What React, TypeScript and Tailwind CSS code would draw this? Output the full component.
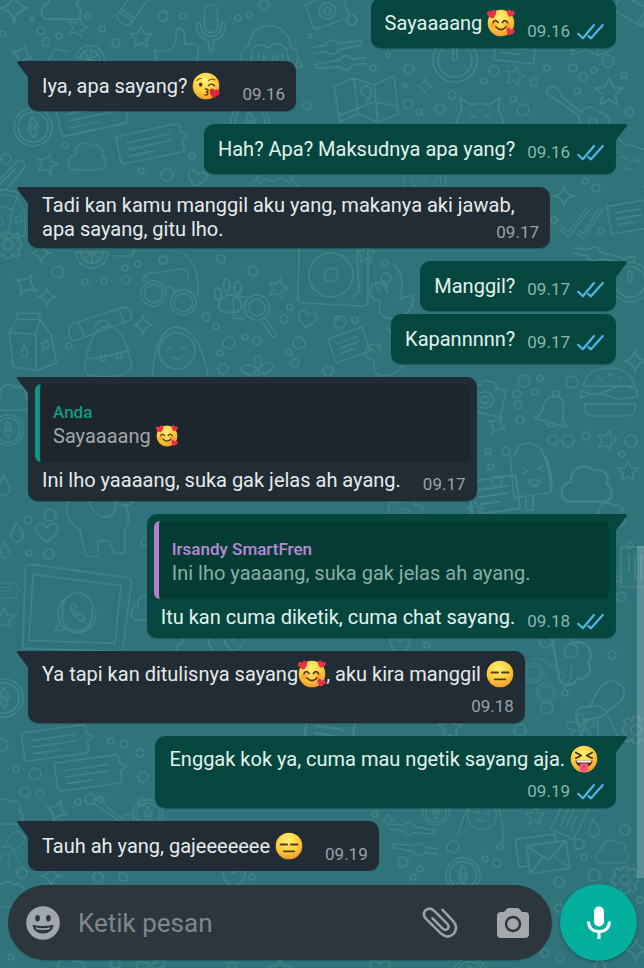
import type { ReactNode } from 'react'

type EmojiName = 'hearts' | 'kiss' | 'flat' | 'tongue'

type Message = {
  id: number
  own?: boolean
  tail?: boolean
  time: string
  layout?: 'inline' | 'wrap' | 'stacked'
  quote?: { author: string; body: ReactNode; own?: boolean }
  body: ReactNode
}

function cx(...classes: Array<string | false | undefined | null>) {
  return classes.filter(Boolean).join(' ')
}

const EMOJI_LABEL: Record<EmojiName, string> = {
  hearts: '🥰',
  kiss: '😘',
  flat: '😑',
  tongue: '😝',
}

const HEART = 'M0 3.4C-2.6 1.6-3.8 .2-3.8-1.4-3.8-3.6-1-4 0-2.1 1-4 3.8-3.6 3.8-1.4 3.8 .2 2.6 1.6 0 3.4Z'

function Emoji({ name, small }: { name: EmojiName; small?: boolean }) {
  return (
    <svg
      viewBox="0 0 28 28"
      role="img"
      aria-label={EMOJI_LABEL[name]}
      className={cx('-mt-1.5 -mb-0.5 inline-block align-middle', small ? 'size-[22px]' : 'size-7')}
    >
      <defs>
        <radialGradient id={`face-${name}`} cx="0.45" cy="0.3" r="0.75">
          <stop offset="0" stopColor="#fff07a" />
          <stop offset="0.55" stopColor="#fdce3c" />
          <stop offset="1" stopColor="#f0912a" />
        </radialGradient>
      </defs>
      <circle cx="14" cy="14" r="13.3" fill={`url(#face-${name})`} />
      {name === 'hearts' && (
        <>
          <circle cx="6.5" cy="16.5" r="3" fill="#f8853c" opacity="0.55" />
          <circle cx="20.5" cy="16" r="3" fill="#f8853c" opacity="0.55" />
          <path d="M6 13.5q2.4-3.6 5 0M15.5 13.5q2.4-3.6 5 0M9 18q5 5 10 0" fill="none" stroke="#5a3310" strokeWidth="1.7" strokeLinecap="round" />
          <g fill="#e8324a">
            <path d={HEART} transform="translate(5 5.5) rotate(-15) scale(1.25)" />
            <path d={HEART} transform="translate(23.5 4.5) rotate(20) scale(1.05)" />
            <path d={HEART} transform="translate(23.2 23) rotate(15) scale(1.1)" />
          </g>
        </>
      )}
      {name === 'kiss' && (
        <>
          <path d="M5 8.5q1.6-2.2 4.4-2M16.5 8.5q3.2-2.6 6.5-.5" fill="none" stroke="#8a5518" strokeWidth="1.2" strokeLinecap="round" />
          <ellipse cx="8.7" cy="12.6" rx="1.7" ry="2.2" fill="#553010" />
          <path d="M16.5 13.6q3-3 6 .2M13.5 17q3 .2 2.4 1.8-.5 1-2 1.1 2.2.3 2 1.7-.3 1.7-2.8 1.5" fill="none" stroke="#553010" strokeWidth="1.4" strokeLinecap="round" />
          <path d={HEART} transform="translate(22.3 21.5) rotate(12) scale(1.35)" fill="#e3243c" />
        </>
      )}
      {name === 'flat' && (
        <path d="M5.5 12.5h6.6M15.9 12.5h6.6M8.8 19.3h10.4" stroke="#5c3a12" strokeWidth="1.8" strokeLinecap="round" />
      )}
      {name === 'tongue' && (
        <>
          <path d="M5.8 7.5l5.4 3-5.4 2.7M22.2 7.5l-5.4 3 5.4 2.7" fill="none" stroke="#4c2c0e" strokeWidth="1.7" strokeLinecap="round" strokeLinejoin="round" />
          <path d="M5.5 15.5h17q-.5 6.5-8.5 6.5t-8.5-6.5Z" fill="#5a2512" />
          <path d="M6.5 15.5h15l-.5 1.9H7Z" fill="#fff" />
          <path d="M9.8 19q4.2-1.8 8.4 0v4q0 4.4-4.2 4.4T9.8 23Z" fill="#f0567c" />
          <path d="M14 19.5v4" stroke="#c93562" strokeWidth="1" strokeLinecap="round" />
        </>
      )}
    </svg>
  )
}

const MESSAGES: Message[] = [
  { id: 1, own: true, time: '09.16', body: <>Sayaaaang <Emoji name="hearts" /></> },
  { id: 2, tail: true, time: '09.16', body: <>Iya, apa sayang? <Emoji name="kiss" /></> },
  { id: 3, own: true, tail: true, time: '09.16', body: 'Hah? Apa? Maksudnya apa yang?' },
  {
    id: 4,
    tail: true,
    time: '09.17',
    layout: 'wrap',
    body: 'Tadi kan kamu manggil aku yang, makanya aki jawab, apa sayang, gitu lho.',
  },
  { id: 5, own: true, tail: true, time: '09.17', body: 'Manggil?' },
  { id: 6, own: true, time: '09.17', body: 'Kapannnnn?' },
  {
    id: 7,
    tail: true,
    time: '09.17',
    quote: { author: 'Anda', own: true, body: <>Sayaaaang <Emoji name="hearts" small /></> },
    body: 'Ini lho yaaaang, suka gak jelas ah ayang.',
  },
  {
    id: 8,
    own: true,
    tail: true,
    time: '09.18',
    quote: { author: 'Irsandy SmartFren', body: 'Ini lho yaaaang, suka gak jelas ah ayang.' },
    body: 'Itu kan cuma diketik, cuma chat sayang.',
  },
  {
    id: 9,
    tail: true,
    time: '09.18',
    layout: 'stacked',
    body: <>Ya tapi kan ditulisnya sayang<Emoji name="hearts" />, aku kira manggil <Emoji name="flat" /></>,
  },
  {
    id: 10,
    own: true,
    tail: true,
    time: '09.19',
    layout: 'stacked',
    body: <>Enggak kok ya, cuma mau ngetik sayang aja. <Emoji name="tongue" /></>,
  },
  { id: 11, tail: true, time: '09.19', body: <>Tauh ah yang, gajeeeeeee <Emoji name="flat" /></> },
]

function Ticks() {
  return (
    <svg viewBox="0 0 27 17" role="img" aria-label="Dibaca" className="h-[17px] w-[27px]">
      <path
        d="M1.2 10.8l4.6 4.5L17 2M11.4 13.2l2.6 2.1L25.8 2"
        fill="none"
        stroke="#4fb4e6"
        strokeWidth="2.2"
        strokeLinecap="round"
        strokeLinejoin="round"
      />
    </svg>
  )
}

function Stamp({ time, own, className }: { time: string; own?: boolean; className?: string }) {
  return (
    <span
      className={cx(
        'flex shrink-0 items-center gap-[7px] text-[17px] leading-5',
        own ? 'text-[#8fb3ad]' : 'text-[#9ba1a8]',
        className
      )}
    >
      <time>{time}</time>
      {own && <Ticks />}
    </span>
  )
}

function Tail({ own }: { own?: boolean }) {
  return (
    <svg
      viewBox="0 0 12 18"
      aria-hidden="true"
      className={cx('absolute top-0 h-[18px] w-3', own ? '-right-[11px] -scale-x-100' : '-left-[11px]')}
    >
      <path d="M12 0H2Q-.8 0 .6 2.4L12 17.5Z" fill={own ? '#05473f' : '#212c34'} />
    </svg>
  )
}

function Quote({ quote, inOwn }: { quote: NonNullable<Message['quote']>; inOwn?: boolean }) {
  return (
    <blockquote
      className={cx(
        'mx-[7px] mt-[7px] rounded-md border-l-5 pt-4 pr-4 pb-[14px] pl-[13px]',
        inOwn ? 'bg-[#043c34]' : 'bg-[#1e262d]',
        quote.own ? 'border-[#0b9583]' : 'border-[#b57fd0]'
      )}
    >
      <cite
        className={cx(
          'block text-[17px] leading-6 font-medium not-italic',
          quote.own ? 'text-[#129a84]' : 'text-[#b98ad6]'
        )}
      >
        {quote.author}
      </cite>
      <p className={cx('text-xl leading-6', inOwn ? 'text-[#88aea4]' : 'text-[#a2a7ab]')}>{quote.body}</p>
    </blockquote>
  )
}

function Bubble({ message }: { message: Message }) {
  const { own, tail, time, quote, body, layout = 'inline' } = message
  // text-only one-liners carry the time a little higher
  const plain = typeof body === 'string' && !quote

  return (
    <li
      className={cx(
        'relative w-fit rounded-[10px] text-xl leading-6 shadow-[0_1px_1px_rgba(0,0,0,0.25)]',
        own ? 'self-end bg-[#05473f] text-[#e2f2ee]' : 'self-start bg-[#212c34] text-[#e6eaed]',
        own && tail && 'rounded-tr-none',
        !own && tail && 'rounded-tl-none',
        tail || message.id === 1 ? 'mt-[13px]' : 'mt-[3px]'
      )}
    >
      {tail && <Tail own={own} />}
      {quote && <Quote quote={quote} inOwn={own} />}
      {layout === 'wrap' && (
        <p className="max-w-[522px] pt-[6px] pr-[11px] pb-[7px] pl-[14px]">
          {body}
          <Stamp time={time} own={own} className="float-right mt-[5px]" />
        </p>
      )}
      {layout === 'stacked' && (
        <div className={cx('flex flex-col gap-[10px] pt-[11px] pb-[7px] pl-[14px]', own ? 'pr-3' : 'pr-[11px]')}>
          <p className={cx(own ? 'pr-[6px]' : 'pr-0')}>{body}</p>
          <Stamp time={time} own={own} className="self-end" />
        </div>
      )}
      {layout === 'inline' && (
        <div
          className={cx(
            'flex items-end justify-between pl-[14px]',
            plain ? 'pb-[12px]' : 'pb-[7px]',
            own ? 'gap-3 pr-3' : 'gap-[22px] pr-[11px]'
          )}
        >
          <p className={cx(quote ? 'pt-[6px] pb-[2px]' : plain ? 'pt-[13px] pb-px' : 'pt-[13px] pb-[6px]')}>{body}</p>
          <Stamp time={time} own={own} />
        </div>
      )}
    </li>
  )
}

// Outline doodles for the wallpaper, each drawn around its own centre.
const DOODLES = {
  star: 'M0-12L3.5-4 12-3.5 5.5 2.5 7.5 11 0 6.5-7.5 11-5.5 2.5-12-3.5-3.5-4Z',
  sparkle: 'M0-11Q1.5-1.5 11 0 1.5 1.5 0 11-1.5 1.5-11 0-1.5-1.5 0-11Z',
  heart: 'M0 10C-8 4-12 0-11-5-9-10-2-9 0-4 2-9 9-10 11-5 12 0 8 4 0 10Z',
  drop: 'M-1-10C2-5 6-1 6 4A6 6 0 0 1-6 4C-6 0-2-4-1-10Z',
  cloud: 'M-15 12C-22 7-18-2-12-2-14-12-1-17 4-10 11-14 17-5 13-1 20 3 17 13 10 12Z',
  chat: 'M-34-14H30Q34-14 34-10V-5L41 0 34 4V12Q34 16 30 16H-30Q-34 16-34 12V-14ZM-24-5H22M-24 2H22M-24 9H4',
  compass: 'M19 0A19 19 0 1 1-19 0 19 19 0 1 1 19 0ZM15 0A15 15 0 1 1-15 0 15 15 0 1 1 15 0ZM-1-11L5-2 1 11-5 2ZM2 0A2 2 0 1 1-2 0 2 2 0 1 1 2 0Z',
  mic: 'M-7-18A7 7 0 0 1 7-18V-2A7 7 0 0 1-7-2ZM-15-5H-11Q-11 9 0 9T11-5H15Q16 10 3 13L2 25H-1L-3 13Q-16 10-15-5',
  tube: 'M-11-28H11V-20H-11ZM-9-20V14Q-9 20 0 20T9 14V-20M-9 8H9M-9 12H9',
  monkey: 'M-24 22C-34 18-28 0-20 0-20-28 22-30 24 2 34 2 34 20 24 24M-18 6Q-12-6 0 2 10-8 20 4M-16 8Q-24 28-6 28-2 20-4 10M6 10Q2 26 14 28 26 22 20 8M-10 8V16M-5 8V15M10 8V15M15 8V15',
  thumb: 'M-24 10H-10Q2 6 0-14 6-18 9-10L10 2H20Q26 2 25 8L22 28H-20Z',
  lime: 'M-16 0A16 16 0 0 1 16 0ZM-11 0A11 11 0 0 1 11 0M0-11V0M-8-8L0 0 8-8M-24-4H-40L-46 12H-18',
  watch: 'M22 0A22 22 0 1 1-22 0 22 22 0 1 1 22 0ZM17 0A17 17 0 1 1-17 0 17 17 0 1 1 17 0ZM-2-12H2V0H-2ZM-5-22V-28H5V-22',
  spoon: 'M-26-4H-12Q-6-12 0-4L24-2V2L0 3Q-6 10-13 2H-26',
  map: 'M-32-14L-12-22 8-15 28-24 32 14 12 22-8 14-26 22ZM-12-22L-8 14M8-15L12 22M-28 16L8 2 32 6M0-4A5 5 0 1 1 5-8Q5-4 1 2Z',
  guitar: 'M-30-14A6 6 0 0 1-20-20L-14-10 4 4Q12-6 22 4 34 6 32 18 26 34 12 26 0 18 2 8L-20-8ZM20 14A4 4 0 1 1 12 14 4 4 0 1 1 20 14Z',
  cat: 'M-20 22Q-28 4-18-8L-20-20-8-13Q0-16 8-13L20-20 18-8Q28 4 20 22M-9 0Q-6-4-3 0M4 0Q7-4 10 0M-4 8Q0 12 4 8',
  glasses: 'M-13 10A14 14 0 1 1-13 9ZM-17 10A10 10 0 1 1-17 9ZM20 20A14 14 0 1 1 20 19ZM16 20A10 10 0 1 1 16 19ZM-12 2Q-4 0-4 10M-38-4Q-40-14-22-14L6-18Q14-14 10-6M22 12Q24-24 6-34',
  backpack: 'M-26 20Q-20-26-2-26 18-28 26 18 20 34-22 28ZM-24 10Q0 8 24 0M-8 5V12H-3V5M10 2V9H15V2M-42-28L18-48Q28-46 26-34L-38-10Q-46-14-42-28ZM-32-30L-26-14M12-46L18-30M-14-24A8 8 0 1 1 2-26',
  milk: 'M-24-10L-16-24H8L20-8 26 22 4 30-20 26ZM-24-10L4-8 4 30M4-8L8-24M-16-24V-30H8V-24M-8 4C-4 8-4 16-8 16S-12 8-8 4M10 2L16-2 18 4 12 8Z',
  lens: 'M14-6A14 14 0 1 1-14-6 14 14 0 1 1 14-6ZM9-6A9 9 0 1 1-9-6 9 9 0 1 1 9-6ZM9 6L22 24Q20 30 15 24L5 9M-14 6H-26V-18H-12',
  paw: 'M-5 14Q-14 10-8 2 0-6 8 2 14 10 5 14ZM-14-2A3 5 0 1 1-8-4 3 5 0 1 1-14-2M-6-10A3 6 0 1 1 0-11 3 6 0 1 1-6-10M4-9A3 6 0 1 1 10-7 3 6 0 1 1 4-9',
  flower: 'M0-4C-12-22 12-24 3-4 16-20 28-2 6 2 22 8 8 24 1 6-4 24-22 12-5 2-26 4-18-16 0-4ZM3 1A3 3 0 1 1-3 1 3 3 0 1 1 3 1Z',
  penguin: 'M-25 30Q-22-24 0-24 24-22 32 30M18 0A18 18 0 1 1-18 0 18 18 0 1 1 18 0ZM-10-1Q-7-6-4-1M3-1Q6-6 9-1M-5 6Q0 10 5 6',
  record: 'M-34-30H30Q36-30 35-24V26Q34 32 28 31L-30 28Q-36 28-35 22ZM20 0A22 22 0 1 1-24 0 22 22 0 1 1 20 0ZM5 0A7 7 0 1 1-9 0 7 7 0 1 1 5 0ZM24-22L26 16 20 22',
  dino: 'M2-30Q14-20 8 4L20 0Q24 16 6 22-16 28-12 6-26 4-20-10-8-16-4-2M-16-8L-12-4M-8-14L-4-8',
  camera: 'M-18-14H-8L-6-20H8L10-14H18Q21-14 21-10V12Q21 16 18 16H-18Q-21 16-21 12V-10Q-21-14-18-14ZM9 1A9 9 0 1 1-9 1 9 9 0 1 1 9 1ZM4 1A4 4 0 1 1-4 1 4 4 0 1 1 4 1Z',
  bell: 'M-17 12Q-10 8-10-4-8-14 0-14 10-14 10-2 10 8 17 14ZM-3-14V-19H3V-14M-5 13Q0 20 6 14',
  burger: 'M-26-8Q-22-26 0-26T26-8ZM-28-4Q-14 4 0-4T28-4V2Q14 8 0 2T-28 4ZM-24 10H26Q28 22 16 22H-16Q-26 22-24 10ZM-10-17L-7-14M0-20L3-18M9-17L12-14',
  popsicle: 'M-20-16Q-14-14-12-26-2-32 10-24 20-8 21 20L-16 26ZM12-20Q22-8 22 18M-8-4L-2-1-8 2M14-7L8-3 14-1M-2 8H10Q8 16 2 14ZM-4 24V38H3V23',
  dog: 'M-30-34Q-44-10-20 4-16 28-12 34H0V16H12L18 30H30V4Q38-8 30-24M-12-34Q-6-8 12-10 24-16 16-34M8-34Q30-14 42-30',
  laptop: 'M-48-44L48-34Q54-32 52-26L46 40H-54L-54-38Q-54-44-48-44ZM-46-34L42-26 38 32H-48ZM18 2A19 19 0 1 1-14-10M-19 14L-22 22-11 19M14 2A15 15 0 1 1-15 2 15 15 0 1 1 14 2ZM-6-6Q-10 0-2 7T7 8L3 3 0 5Q-4 2-4-1L-2-4Z',
  envelope: 'M-20-14H20V14H-20ZM-20-14L0 3 20-14M-20 14L-5-1M20 14L5-1M-20 6H-30V-22H10V-14',
  note: 'M-20-14H20V14H-20ZM-12-6H12M-12 0H12M-12 6H4',
  clip: 'M-16 4L8-14Q16-14 14-6L-8 12Q-16 14-16 8L4-6',
  ticks: 'M-24 6L-14 14 8-16M-26 10L-14 20 12-14M-2 12L4 16 24-16M-4 16L4 22 28-14',
  plant: 'M-20 24Q-32 2-10 4 4-30 18-20 34-8 10 6 4 16-14 16ZM-12 16L-20 36M-2 16V38M8 12L18 34M-10 4Q0 0 6 8',
  gear: 'M-3-13H3L4-9 9-12 12-8 9-4 13-3V3L9 4 12 9 8 12 4 9 3 13H-3L-4 9-9 12-12 8-9 4-13 3V-3L-9-4-12-9-8-12-4-9ZM5 0A5 5 0 1 1-5 0 5 5 0 1 1 5 0Z',
}

type Doodle = [name: keyof typeof DOODLES, x: number, y: number, scale?: number, angle?: number]

const WALLPAPER: Doodle[] = [
  ['sparkle', 14, 8, 1.3], ['cloud', 62, 6, 1.1], ['tube', 132, 8, 0.9, 35], ['star', 78, 27, 0.8, 15],
  ['star', 141, 37, 0.9], ['mic', 211, 28, 0.95], ['monkey', 268, 46, 0.95], ['thumb', 176, 42, 0.9],
  ['lime', 90, 60, 0.9, 12], ['sparkle', 22, 55, 1, 20], ['compass', 33, 127], ['chat', 92, 114, 1, -12],
  ['chat', 150, 143, 0.95, -12], ['cloud', 88, 157, 1.05], ['star', 47, 164, 0.85, 15], ['clip', 12, 176, 1, -10],
  ['heart', 197, 178, 0.85, 15], ['monkey', 273, 180, 0.8], ['compass', 250, 122, 1], ['tube', 635, 12, 1, -60],
  ['watch', 455, 60], ['spoon', 338, 47, 1, -10], ['spoon', 340, 63, -1, -8], ['map', 366, 100],
  ['star', 515, 76, 0.8, 15], ['star', 609, 92, 1.15], ['sparkle', 425, 86, 0.7], ['guitar', 577, 108],
  ['cat', 480, 118, 1], ['note', 515, 48, 1, 6], ['map', 590, 40, 0.7], ['camera', 327, 10, 0.9, -20],
  ['sparkle', 564, 196, 0.9], ['ticks', 580, 221, 0.8], ['note', 629, 217, 1, -10], ['cat', 630, 160, 1, 15],
  ['record', 425, 176, 0.6], ['milk', 8, 215, 0.8, 10], ['gear', 8, 245, 1], ['sparkle', 41, 253, 0.9],
  ['lime', 92, 252, 1, 180], ['sparkle', 26, 285, 1.1, 30], ['sparkle', 47, 297, 0.8], ['glasses', 178, 285, 0.9],
  ['backpack', 108, 350, 0.9], ['milk', 32, 342, 0.95], ['sparkle', 143, 325, 0.9], ['penguin', 177, 351],
  ['paw', 230, 297, 1.1], ['lens', 257, 313, 0.9], ['heart', 307, 319, 0.85, 15], ['flower', 257, 372, 0.9],
  ['star', 278, 288, 0.85, 15], ['record', 333, 275], ['dino', 392, 295], ['note', 349, 345, 0.9, -20],
  ['star', 366, 254, 0.8], ['dino', 385, 355, 0.9], ['watch', 630, 282, 0.9], ['spoon', 600, 256, 1, 10],
  ['camera', 485, 399, 0.9, 12], ['bell', 553, 410, 1, 12], ['burger', 609, 394], ['sparkle', 635, 361, 1],
  ['sparkle', 497, 425, 0.9, 30], ['star', 607, 440, 0.85, 15], ['star', 628, 471, 0.85], ['popsicle', 530, 472],
  ['cloud', 588, 485, 1.4], ['note', 494, 495, 1.2, -8], ['cloud', 12, 398, 1], ['compass', 8, 430, 0.8],
  ['drop', 4, 485, 1], ['dog', 98, 526, 0.9], ['heart', 47, 532, 1], ['drop', 17, 532, 1],
  ['drop', 5, 550, 0.8], ['chat', 0, 590, 0.5], ['star', 4, 618, 0.9], ['laptop', 78, 610, 1, 2],
  ['compass', 4, 698, 1], ['heart', 234, 643, 0.9], ['cloud', 195, 645, 1], ['cloud', 150, 608, 1],
  ['note', 635, 567, 1, 90], ['cloud', 610, 515, 0.9], ['plant', 600, 703], ['glasses', 552, 680, 0.7, 40],
  ['cloud', 573, 660, 1.4, 80], ['heart', 400, 645, 0.9], ['gear', 636, 730], ['chat', 55, 742, 0.95, -8],
  ['chat', 88, 772, 0.95, -8], ['sparkle', 57, 811, 1, 20], ['cloud', 6, 812, 1], ['guitar', 118, 815, 0.8],
  ['plant', 10, 845, 0.6], ['compass', 148, 815, 0.8], ['spoon', 414, 830, 0.9, 6], ['spoon', 414, 848, -0.9, 6],
  ['penguin', 482, 815, 0.8, 10], ['star', 535, 816, 0.8], ['note', 570, 818, 0.9, -65], ['drop', 594, 828, 0.9],
  ['envelope', 548, 857, 1, -8], ['cloud', 613, 852, 0.9], ['compass', 463, 875, 0.9], ['gear', 625, 880],
  ['compass', 436, 812, 0.7], ['sparkle', 51, 876, 0.9], ['heart', 234, 878, 1], ['cloud', 10, 895, 1],
  ['sparkle', 636, 950, 1], ['flower', 150, 968, 0.8], ['compass', 470, 975, 0.9], ['heart', 380, 968, 0.9],
  ['star', 280, 970], ['cloud', 70, 972, 1], ['note', 330, 728, 1.2, 8], ['star', 450, 728, 1],
  ['flower', 580, 728, 0.8], ['sparkle', 388, 820, 0.6], ['camera', 405, 515, 0.8, 8], ['star', 475, 510, 0.7],
]

// Small bubbles scattered between the doodles
const DOTS = [
  [32, 19, 2], [41, 31, 4], [59, 36, 3], [46, 42, 4], [88, 16, 3], [102, 29, 3], [116, 43, 4], [163, 16, 5],
  [183, 16, 3], [238, 18, 3], [249, 15, 3], [264, 5, 5], [3, 34, 3], [310, 36, 2], [307, 106, 4], [299, 65, 3],
  [352, 20, 5], [373, 68, 3], [388, 55, 2], [409, 69, 5], [405, 85, 2], [452, 95, 4], [408, 104, 5], [419, 112, 3],
  [440, 109, 5], [494, 71, 5], [484, 81, 3], [513, 99, 3], [523, 110, 6], [534, 82, 4], [547, 68, 3], [573, 68, 4],
  [594, 70, 3], [608, 61, 6], [583, 77, 4], [577, 91, 3], [624, 75, 3], [629, 112, 4], [65, 145, 3], [141, 171, 3],
  [167, 175, 6], [192, 156, 3], [6, 159, 5], [585, 181, 3], [596, 188, 4], [554, 220, 3], [601, 231, 3], [58, 272, 6],
  [85, 282, 3], [104, 281, 3], [125, 268, 3], [138, 264, 3], [163, 260, 4], [126, 280, 4], [206, 317, 4], [216, 326, 3],
  [229, 343, 6], [245, 337, 3], [257, 341, 4], [220, 353, 3], [223, 369, 5], [284, 319, 4], [290, 307, 3], [299, 343, 6],
  [289, 352, 3], [295, 363, 4], [221, 259, 4], [253, 271, 5], [69, 346, 3], [385, 263, 3], [386, 278, 5], [340, 322, 6],
  [337, 318, 2], [355, 320, 3], [328, 371, 5], [524, 381, 6], [540, 378, 3], [517, 394, 4], [518, 405, 4], [535, 392, 3],
  [572, 382, 6], [520, 420, 4], [553, 440, 5], [568, 441, 6], [586, 436, 4], [488, 451, 3], [506, 451, 4], [491, 467, 3],
  [497, 481, 5], [631, 441, 6], [622, 454, 3], [50, 515, 6], [28, 520, 4], [49, 554, 5], [29, 553, 3], [145, 542, 4],
  [619, 579, 3], [621, 597, 5], [630, 545, 3], [546, 642, 6], [571, 651, 7], [612, 655, 4], [565, 693, 3], [547, 708, 6],
  [427, 645, 3], [520, 730, 6], [35, 774, 6], [25, 792, 5], [40, 794, 4], [78, 802, 3], [90, 799, 5], [101, 799, 3],
  [124, 744, 4], [111, 741, 3], [140, 753, 4], [143, 777, 5], [142, 802, 4], [2, 745, 6], [16, 769, 3], [375, 814, 3],
  [453, 847, 6], [500, 847, 3], [485, 859, 3], [497, 863, 4], [420, 869, 3], [403, 862, 5], [413, 877, 3], [579, 844, 5],
  [584, 857, 3], [594, 875, 6], [625, 830, 5], [559, 882, 5], [22, 873, 5], [98, 877, 5], [123, 877, 4], [252, 877, 3],
  [545, 953, 4], [600, 966, 5], [11, 957, 3], [115, 963, 5], [559, 908, 4], [640, 900, 3], [560, 958, 4], [232, 966, 4],
]

function Wallpaper() {
  return (
    <svg
      viewBox="0 0 644 968"
      preserveAspectRatio="xMidYMid slice"
      aria-hidden="true"
      className="absolute inset-0 size-full"
      fill="none"
      stroke="#4b8b8f"
      strokeWidth="1.7"
      strokeLinejoin="round"
      strokeLinecap="round"
      opacity="0.7"
    >
      {WALLPAPER.map(([name, x, y, scale = 1, angle = 0], i) => (
        <path key={i} d={DOODLES[name]} transform={`translate(${x} ${y}) rotate(${angle}) scale(${scale})`} />
      ))}
      {DOTS.map(([x, y, r], i) => (
        <circle key={i} cx={x} cy={y} r={r} />
      ))}
    </svg>
  )
}

function Composer() {
  return (
    <form className="relative flex items-center gap-2 pt-[13px] pr-[7px] pb-[7px] pl-2" onSubmit={(e) => e.preventDefault()}>
      <div className="flex h-[75px] min-w-0 flex-1 items-center rounded-full bg-[#2b363d] pr-[22px] pl-[18px] shadow-[0_1px_1px_rgba(0,0,0,0.2)]">
        <button type="button" aria-label="Emoji" className="shrink-0">
          <svg viewBox="0 0 34 34" className="size-[34px]">
            <circle cx="17" cy="17" r="16.8" fill="#a2a7ac" />
            <ellipse cx="11.6" cy="12.3" rx="2.3" ry="3.3" fill="#2b363d" />
            <ellipse cx="22.4" cy="12.3" rx="2.3" ry="3.3" fill="#2b363d" />
            <path d="M6.5 18.8Q17 21.4 27.5 18.8 26.3 27.6 17 27.6T6.5 18.8Z" fill="#2b363d" />
            <path d="M9.4 21.3Q17 23 24.6 21.3L23.8 23.2Q17 24.8 10.2 23.2Z" fill="#a2a7ac" />
          </svg>
        </button>
        <input
          type="text"
          aria-label="Ketik pesan"
          placeholder="Ketik pesan"
          className="ml-[18px] h-10 min-w-0 flex-1 bg-transparent text-[26px] text-[#e6eaed] outline-none placeholder:text-[#7f868c]"
        />
        <button type="button" aria-label="Lampirkan" className="mr-[38px] shrink-0">
          <svg viewBox="0 0 36 34" className="h-[34px] w-9">
            <path
              d="M20.5 3.8L31.2 15.2Q36.6 21.5 31.8 27.6 25.8 33.2 19.6 28.1L3.6 12.4Q.2 8 3.6 4.2 7.8 .8 12 4.6L25.6 18.2Q27.6 20.8 25.6 23 23.2 24.8 20.9 22.8L10.4 12.2"
              fill="none"
              stroke="#9ba0a5"
              strokeWidth="2.6"
              strokeLinecap="round"
            />
          </svg>
        </button>
        <button type="button" aria-label="Kamera" className="shrink-0">
          <svg viewBox="0 0 34 32" className="h-8 w-[34px]">
            <path
              d="M8 5L10.5 2Q11.500 1 13 1H21Q22.500 1 23.500 2L26 5H29Q33 5 33 9V27Q33 31 29 31H5Q1 31 1 27V9Q1 5 5 5Z"
              fill="#a4a7ab"
            />
            <circle cx="17" cy="17" r="7" fill="none" stroke="#2b363d" strokeWidth="2.4" />
          </svg>
        </button>
      </div>
      <button
        type="button"
        aria-label="Rekam suara"
        className="flex size-[77px] shrink-0 items-center justify-center rounded-full bg-[#02af9c] shadow-[0_1px_3px_rgba(0,0,0,0.35)]"
      >
        <svg viewBox="0 0 24 34" className="h-[34px] w-6">
          <rect x="7" y="0.5" width="10" height="20" rx="5" fill="#fff" />
          <path d="M1.5 15.5Q2 25.5 12 25.5T22.5 15.5M12 25.5V33" fill="none" stroke="#fff" strokeWidth="3" />
        </svg>
      </button>
    </form>
  )
}

export default function App() {
  return (
    <div className="relative flex h-screen flex-col overflow-hidden bg-[#30737b] font-['Roboto','Noto_Sans',sans-serif]">
      <Wallpaper />
      <main className="relative flex min-h-0 flex-1 flex-col justify-end overflow-hidden">
        <ul className="flex flex-col px-7">
          {MESSAGES.map((message) => (
            <Bubble key={message.id} message={message} />
          ))}
        </ul>
      </main>
      <Composer />
      {/* scroll thumb */}
      <div className="absolute right-0 bottom-[90px] h-[332px] w-[7px] bg-white/20" />
    </div>
  )
}
